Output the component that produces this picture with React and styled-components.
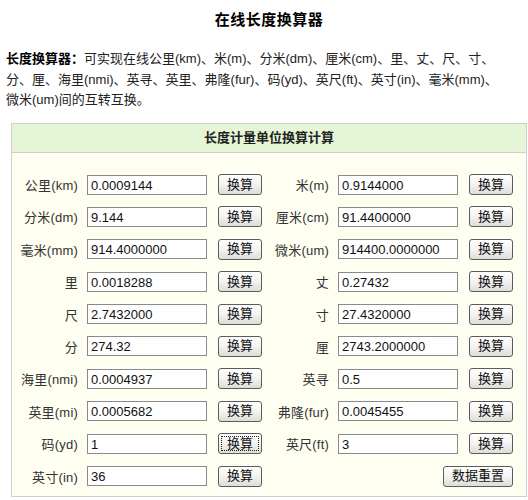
import React from 'react';
import styled, { createGlobalStyle } from 'styled-components';

const GlobalStyle = createGlobalStyle`
  html, body {
    margin: 0;
    padding: 0;
    background: #ffffff;
  }
  body {
    font-family: "Liberation Sans", Arial, "Noto Sans CJK SC", sans-serif;
    color: #222;
  }
`;

const Page = styled.div`
  width: 528px;
  height: 500px;
  overflow: hidden;
  padding: 0 1px 0 11px;
  box-sizing: border-box;
`;

const Title = styled.h1`
  margin: 0;
  padding-top: 8px;
  height: 24px;
  text-align: center;
  font-size: 15px;
  font-weight: bold;
  color: #000;
  letter-spacing: 0.5px;
`;

const Intro = styled.p`
  margin: 17px 0 0 -5px;
  font-size: 13px;
  line-height: 20.5px;
  color: #222;
  white-space: nowrap;

  b {
    color: #000;
  }
`;

const Box = styled.div`
  margin-top: 12px;
  border: 1px solid #cfcfcf;
  background: #fefef1;
`;

const BoxHead = styled.div`
  height: 28px;
  line-height: 28px;
  text-align: center;
  background: #e5f6d6;
  border-bottom: 1px solid #cfcfcf;
  font-size: 13px;
  font-weight: bold;
  color: #222;
`;

const Grid = styled.div`
  display: grid;
  grid-template-columns: 251px 251px;
  row-gap: 12.4px;
  padding: 22px 0 10px 0;
`;

const Field = styled.div`
  display: flex;
  align-items: center;
  justify-content: ${p => (p.$end ? 'flex-end' : 'flex-start')};
  height: 20px;
  padding-right: ${p => (p.$end ? '1px' : '0')};
`;

const Label = styled.label`
  width: 66px;
  margin-right: 9px;
  text-align: right;
  font-size: 13px;
  letter-spacing: 0.2px;
  color: #333;
  white-space: nowrap;
`;

const Input = styled.input`
  width: 120px;
  height: 20px;
  box-sizing: border-box;
  margin: 0 11px 0 0;
  padding: 1px 3px 0;
  border: 1px solid #8a8a8a;
  background: #fff;
  font-family: "Liberation Sans", Arial, sans-serif;
  font-size: 13px;
  color: #111;
`;

const Button = styled.button`
  height: 21px;
  padding: 0 8px;
  box-sizing: border-box;
  border: 1px solid #5c5c5c;
  border-radius: 3px;
  background: linear-gradient(#ffffff, #f3f3f1 50%, #dcdcd8);
  font-family: "Liberation Sans", "Noto Sans CJK SC", sans-serif;
  font-size: 13px;
  line-height: 18px;
  color: #111;
  cursor: pointer;
  outline: ${p => (p.$focused ? '1px dotted #222' : 'none')};
  outline-offset: -4px;
`;

const rows = [
  ['公里(km)', '0.0009144', '米(m)', '0.9144000'],
  ['分米(dm)', '9.144', '厘米(cm)', '91.4400000'],
  ['毫米(mm)', '914.4000000', '微米(um)', '914400.0000000'],
  ['里', '0.0018288', '丈', '0.27432'],
  ['尺', '2.7432000', '寸', '27.4320000'],
  ['分', '274.32', '厘', '2743.2000000'],
  ['海里(nmi)', '0.0004937', '英寻', '0.5'],
  ['英里(mi)', '0.0005682', '弗隆(fur)', '0.0045455'],
  ['码(yd)', '1', '英尺(ft)', '3'],
];

function Unit({ name, value, focused }) {
  return (
    <Field>
      <Label>{name}</Label>
      <Input defaultValue={value} />
      <Button $focused={focused}>换算</Button>
    </Field>
  );
}

export default function App() {
  return (
    <Page>
      <GlobalStyle />
      <Title>在线长度换算器</Title>
      <Intro>
        <b>长度换算器：</b>可实现在线公里(km)、米(m)、分米(dm)、厘米(cm)、里、丈、尺、寸、
        <br />
        分、厘、海里(nmi)、英寻、英里、弗隆(fur)、码(yd)、英尺(ft)、英寸(in)、毫米(mm)、
        <br />
        微米(um)间的互转互换。
      </Intro>
      <Box>
        <BoxHead>长度计量单位换算计算</BoxHead>
        <Grid>
          {rows.map(r => (
            <React.Fragment key={r[0]}>
              <Unit name={r[0]} value={r[1]} focused={r[0] === '码(yd)'} />
              <Unit name={r[2]} value={r[3]} />
            </React.Fragment>
          ))}
          <Unit name="英寸(in)" value="36" />
          <Field $end>
            <Button>数据重置</Button>
          </Field>
        </Grid>
      </Box>
    </Page>
  );
}
